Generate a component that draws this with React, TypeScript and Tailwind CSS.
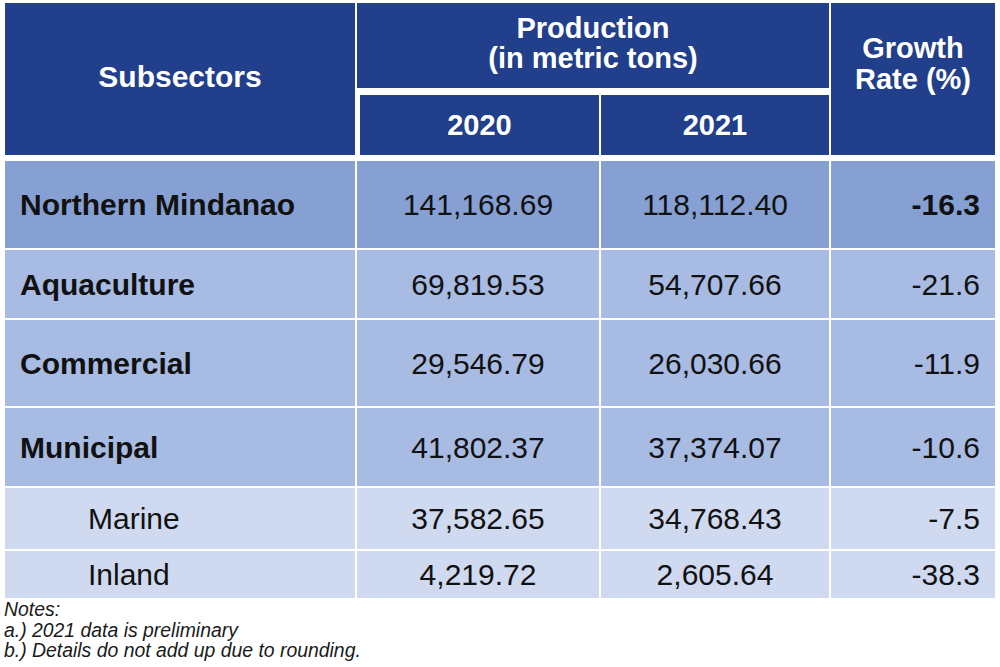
import React from 'react';

const cols = 'grid grid-cols-[350px_242px_228px_164px] gap-x-[2px]';

type Row = {
  name: string;
  y2020: string;
  y2021: string;
  rate: string;
  bg: string;
  h: string;
  bold?: boolean;
  sub?: boolean;
};

const rows: Row[] = [
  { name: 'Northern Mindanao', y2020: '141,168.69', y2021: '118,112.40', rate: '-16.3', bg: 'bg-[#86a0d4]', h: 'h-[87px]', bold: true },
  { name: 'Aquaculture', y2020: '69,819.53', y2021: '54,707.66', rate: '-21.6', bg: 'bg-[#a8bbe2]', h: 'h-[68px]' },
  { name: 'Commercial', y2020: '29,546.79', y2021: '26,030.66', rate: '-11.9', bg: 'bg-[#a8bbe2]', h: 'h-[86px]' },
  { name: 'Municipal', y2020: '41,802.37', y2021: '37,374.07', rate: '-10.6', bg: 'bg-[#a8bbe2]', h: 'h-[78px]' },
  { name: 'Marine', y2020: '37,582.65', y2021: '34,768.43', rate: '-7.5', bg: 'bg-[#cfd9ef]', h: 'h-[61px]', sub: true },
  { name: 'Inland', y2020: '4,219.72', y2021: '2,605.64', rate: '-38.3', bg: 'bg-[#cfd9ef]', h: 'h-[47px]', sub: true },
];

export default function App() {
  return (
    <div className="w-[1000px] h-[667px] bg-white pt-[3px] pl-[5px] font-['Liberation_Sans',Arial,sans-serif] text-[#111]">
      {/* Header */}
      <div className={`${cols} grid-rows-[85px_60px] gap-y-[7px] text-white font-bold text-[29px] leading-[30px]`}>
        <div className="row-span-2 bg-[#223f8b] flex items-center justify-center pb-[4px] text-[30px]">Subsectors</div>
        <div className="col-span-2 bg-[#223f8b] flex flex-col items-center justify-center pb-[6px]">
          <span>Production</span>
          <span>(in metric tons)</span>
        </div>
        <div className="row-span-2 bg-[#223f8b] flex flex-col items-center pt-[30px] leading-[31px]">
          <span>Growth</span>
          <span>Rate (%)</span>
        </div>
        <div className="bg-[#223f8b] ml-[3px] flex items-center justify-center">2020</div>
        <div className="bg-[#223f8b] flex items-center justify-center">2021</div>
      </div>

      {/* Body */}
      <div className="mt-[6px] flex flex-col gap-y-[2px] text-[30px]">
        {rows.map((r) => (
          <div key={r.name} className={`${cols} ${r.h}`}>
            <div className={`${r.bg} flex items-center ${r.sub ? 'pl-[83px]' : 'pl-[15px] font-bold'}`}>{r.name}</div>
            <div className={`${r.bg} flex items-center justify-center`}>{r.y2020}</div>
            <div className={`${r.bg} flex items-center justify-center`}>{r.y2021}</div>
            <div className={`${r.bg} flex items-center justify-end pr-[15px] ${r.bold ? 'font-bold' : ''}`}>{r.rate}</div>
          </div>
        ))}
      </div>

      {/* Notes */}
      <div className="mt-[1px] -ml-[1px] italic text-[19.4px] leading-[20.5px] text-[#1a1a1a]">
        <div>Notes:</div>
        <div>a.) 2021 data is preliminary</div>
        <div>b.) Details do not add up due to rounding.</div>
      </div>
    </div>
  );
}
